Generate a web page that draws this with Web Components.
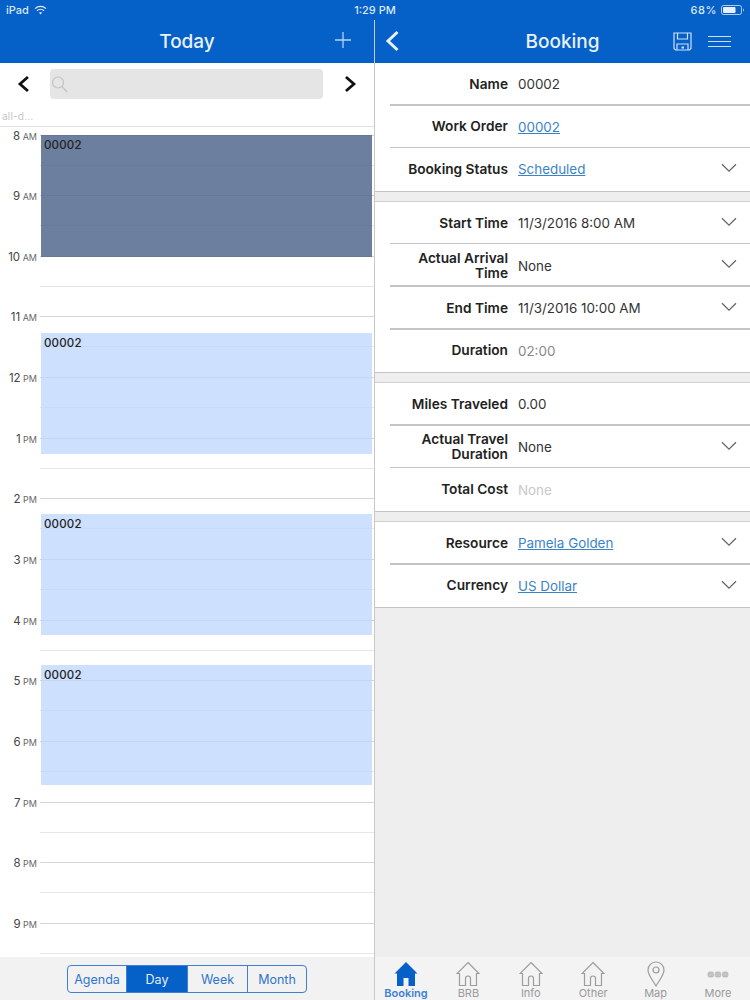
<!DOCTYPE html>
<html><head><meta charset="utf-8"><title>Booking</title>
<style>
html,body{margin:0;padding:0;background:#fff}
body{width:750px;height:1000px;overflow:hidden;font-family:Inter,"Liberation Sans",sans-serif;color:#222}
</style></head><body>
<app-shell>
  <status-bar slot="status"></status-bar>
  <cal-pane slot="left"></cal-pane>
  <booking-pane slot="right"></booking-pane>
</app-shell>
<script>
const def=(name,html,setup)=>customElements.define(name,class extends HTMLElement{
  connectedCallback(){ if(this.shadowRoot) return; const r=this.attachShadow({mode:'open'}); r.innerHTML=typeof html==='function'?html(this):html; setup&&setup(r,this);}
});
const chev=`<svg width="16" height="10" viewBox="0 0 16 10" fill="none" stroke="#666" stroke-width="1.300"><path d="M1 1.200 8 8.200 15 1.200"/></svg>`;
def('app-shell',`<style>:host{display:grid;grid-template-columns:375px 375px;grid-template-rows:20px 980px;width:750px;height:1000px;background:#0560c7}
::slotted([slot=status]){grid-column:1/3}</style><slot name="status"></slot><slot name="left"></slot><slot name="right"></slot>`);
def('status-bar',`<style>:host{display:flex;align-items:center;justify-content:space-between;padding:0 5px 0 6px;color:#dbe8f8;font:500 11px Inter,"Liberation Sans",sans-serif;position:relative}
.l,.r{display:flex;align-items:center;gap:5px}.r{gap:4px}.t{position:absolute;left:0;right:0;text-align:center}
</style><div class="l"><span>iPad</span><svg width="13" height="10" viewBox="0 0 13 10" fill="none" stroke="#dbe8f8" stroke-width="1.300"><path d="M1 3.600a8 8 0 0 1 11 0M3 5.800a5 5 0 0 1 7 0"/><path d="M5 7.800a2.200 2.200 0 0 1 3 0L6.500 9.400z" fill="#dbe8f8" stroke="none"/></svg></div>
<span class="t">1:29 PM</span>
<div class="r"><span style="letter-spacing:.6px">68%</span><svg width="24" height="10" viewBox="0 0 24 10"><rect x=".5" y=".5" width="20" height="9" rx="2" fill="none" stroke="#dbe8f8" opacity=".8"/><rect x="2" y="2" width="12.500" height="6" rx="1" fill="#e8f0fb"/><path d="M22 3.500c1 .4 1 2.600 0 3z" fill="#dbe8f8"/></svg></div>`);
def('nav-bar',`<style>:host{display:flex;align-items:center;justify-content:center;height:43px;background:#0560c7;color:#e9f1fb;position:relative;box-sizing:border-box;font:500 19px Inter,"Liberation Sans",sans-serif}
::slotted([slot=lead]){position:absolute;left:10px;top:10px}
::slotted([slot=trail]){position:absolute;right:19px;top:12px;display:flex;gap:16px;align-items:center}
::slotted(svg[slot=trail]){right:22px;top:11px}
</style><slot></slot><slot name="lead"></slot><slot name="trail"></slot>`);
def('cal-toolbar',`<style>:host{display:block;height:64px;box-sizing:border-box;border-bottom:1.500px solid #e2e2e2;background:#fff}
.top{display:flex;align-items:center;height:42px;padding:0 16px}
.s{margin:0 20px 0 19px;width:274px;height:30px;background:#e5e5e5;border-radius:4px;display:flex;align-items:center;padding-left:1px}
.a{font:400 10px Inter,"Liberation Sans",sans-serif;color:#c6c6c6;padding:5px 2px 0;letter-spacing:.2px}
</style><div class="top"><svg width="15" height="18" viewBox="0 0 15 18" fill="none" stroke="#111" stroke-width="2.800"><path d="M12 2 4 9l8 7"/></svg>
<div class="s"><svg width="17" height="18" viewBox="0 0 17 18" fill="none" stroke="#c2c2c2" stroke-width="1.200"><circle cx="7" cy="7.500" r="5.500"/><path d="M11 11.500 16 17"/></svg></div>
<svg width="15" height="18" viewBox="0 0 15 18" fill="none" stroke="#111" stroke-width="2.800"><path d="M3 2l8 7-8 7"/></svg></div><div class="a">all-d...</div>`);
def('cal-hour',h=>{const [n,m]=h.getAttribute('t').split(' ');return `<style>:host{display:block;height:60.670px;position:relative}
.lb{position:absolute;right:calc(100% - 37px);top:-6px;white-space:nowrap;font:400 11.500px Inter,"Liberation Sans",sans-serif;color:#444}
.lb small{font-size:9px;color:#666}
.ln{position:absolute;left:40px;right:0;height:1px;background:#d6d6d6}.a{top:0}.b{top:30px;background:#e6e6e6}
</style><div class="lb">${n}<small> ${m}</small></div><div class="ln a"></div><div class="ln b"></div>`});
def('cal-event',`<style>:host{position:absolute;left:41px;width:331px;display:block;box-sizing:border-box;background:rgba(188,214,252,.75);font:500 11.500px Inter,"Liberation Sans",sans-serif;color:#222;padding:3px 3px;letter-spacing:.2px}
:host([dark]){background:rgba(76,99,138,.82)}</style><slot></slot>`);
def('seg-ctl',`<style>:host{display:flex;width:240px;height:28px;box-sizing:border-box;border:1.500px solid #3f7fd6;border-radius:4px;font:400 12.500px Inter,"Liberation Sans",sans-serif;color:#2f74cf;overflow:hidden}
span{display:flex;align-items:center;justify-content:center;box-sizing:border-box;border-right:1px solid #3f7fd6;flex:none}
.on{background:#0560c7;color:#e5eefa}</style>
<span style="width:59px">Agenda</span><span class="on" style="width:61px">Day</span><span style="width:60px">Week</span><span style="flex:1;border:0">Month</span>`);
def('cal-pane',()=>{
 const hs=['8 AM','9 AM','10 AM','11 AM','12 PM','1 PM','2 PM','3 PM','4 PM','5 PM','6 PM','7 PM','8 PM','9 PM'];
 return `<style>:host{display:flex;flex-direction:column;height:980px;border-right:1px solid #c8c8c8;box-sizing:border-box;background:#fff}
.g{height:830px;position:relative;overflow:hidden;padding-top:7.500px;box-sizing:border-box}
.b{flex:1;background:#f2f2f2;display:flex;justify-content:center;padding-top:8px}
.h{position:relative}</style>
<nav-bar>Today<svg slot="trail" width="18" height="18" viewBox="0 0 18 18" stroke="#b9d2f1" stroke-width="1.300"><path d="M9 1v16M1 9h16"/></svg></nav-bar>
<cal-toolbar></cal-toolbar>
<div class="g"><div class="h">${hs.map(t=>`<cal-hour t="${t}"></cal-hour>`).join('')}
<cal-event dark style="top:0;height:122px">00002</cal-event>
<cal-event style="top:198px;height:121px">00002</cal-event>
<cal-event style="top:379px;height:121px">00002</cal-event>
<cal-event style="top:530px;height:120px">00002</cal-event></div></div>
<div class="b"><seg-ctl></seg-ctl></div>`});
def('form-row',h=>{const v=h.getAttribute('k');return `<style>:host{display:flex;align-items:center;height:42.600px;position:relative;box-sizing:border-box;font:400 13.400px Inter,"Liberation Sans",sans-serif;color:#333;background:#fff}
:host(:not(:last-child))::after{content:"";position:absolute;left:15px;right:0;bottom:0;height:1.500px;background:#c4c4c4}
.k{width:133px;box-sizing:border-box;padding-left:25px;text-align:right;font-weight:600;font-size:13.700px;color:#222;line-height:15px;flex:none}.v{margin-left:10px;flex:1}
.c{position:absolute;right:13px;top:15px;display:flex}
</style><div class="k">${v}</div><div class="v"><slot></slot></div>${h.hasAttribute('chev')?`<span class="c">${chev}</span>`:''}`});
def('form-sec',`<style>:host{display:block;background:#fff;border-bottom:1px solid #c4c4c4;border-top:1px solid #d0d0d0;margin-bottom:9px}:host([first]){border-top:0}</style><slot></slot>`);
def('tab-bar',`<style>:host{display:flex;height:43px;background:#f3f3f3;justify-content:space-between;padding:0 9px 0 8px}</style><slot></slot>`);
const home=(f)=>`<svg width="24" height="26" viewBox="0 0 24 26" fill="${f?'#0560c7':'none'}" stroke="${f?'none':'#9c9c9c'}" stroke-width="1.200"><path d="${f?'M12 1 23.500 12.500H21V25H14.500V17H9.500V25H3V12.500H.5z':'M12 1.500 23 12.500H20.500V24.500H14.500V17.500A2.500 2.500 0 0 0 9.500 17.500V24.500H3.500V12.500H1z'}"/></svg>`;
const ic={home:home(0),on:home(1),
 pin:`<svg width="18" height="26" viewBox="0 0 18 26" fill="none" stroke="#9c9c9c" stroke-width="1.200"><path d="M9 25C5 18 1 14 1 9a8 8 0 0 1 16 0c0 5-4 9-8 16z"/><circle cx="9" cy="9" r="3"/></svg>`,
 more:`<svg width="22" height="26" viewBox="0 0 22 26" fill="#c4c4c4" stroke="#aaa" stroke-width=".6"><rect x="1" y="11" width="5.500" height="5" rx="1.500"/><rect x="8.200" y="11" width="5.500" height="5" rx="1.500"/><rect x="15.500" y="11" width="5.500" height="5" rx="1.500"/></svg>`};
def('tab-item',h=>`<style>:host{display:flex;flex-direction:column;align-items:center;width:46px;padding-top:4px;font:400 11px Inter,"Liberation Sans",sans-serif;color:#9a9a9a;line-height:12px;height:43px;box-sizing:border-box}
:host([on]){color:#3c82d6;font-weight:600}svg{display:block}</style>${ic[h.getAttribute('i')]}<slot></slot>`);
const lnk='color:#3a83c8;text-decoration:underline';
def('booking-pane',`<style>:host{display:flex;flex-direction:column;height:980px;background:#eeeeee}.sp{flex:1}
svg{display:block}</style>
<nav-bar>Booking
<svg slot="lead" width="15" height="22" viewBox="0 0 15 22" fill="none" stroke="#e9f1fb" stroke-width="3"><path d="M12.500 2 3 11l9.500 9"/></svg>
<span slot="trail"><svg width="19" height="19" viewBox="0 0 19 19" fill="none" stroke="#cfe0f5" stroke-width="1.200"><path d="M1 1h17v15.500L16.500 18H2.500L1 16.500z"/><path d="M4.500 1v6h10V1M4 18v-6h11v6"/><rect x="8.500" y="14.500" width="2.500" height="2" fill="#cfe0f5" stroke="none"/></svg>
<svg width="23" height="13" viewBox="0 0 23 13" stroke="#cfe0f5" stroke-width="1.200"><path d="M0 1.500h23M0 6.500h23M0 11.500h23"/></svg></span></nav-bar>
<form-sec first><form-row k="Name">00002</form-row><form-row k="Work Order"><a style="${lnk}">00002</a></form-row><form-row k="Booking Status" chev><a style="${lnk}">Scheduled</a></form-row></form-sec>
<form-sec><form-row k="Start Time" chev>11/3/2016 8:00 AM</form-row><form-row k="Actual Arrival Time" chev>None</form-row><form-row k="End Time" chev>11/3/2016 10:00 AM</form-row><form-row k="Duration"><span style="color:#888">02:00</span></form-row></form-sec>
<form-sec><form-row k="Miles Traveled">0.00</form-row><form-row k="Actual Travel Duration" chev>None</form-row><form-row k="Total Cost"><span style="color:#c8c8c8">None</span></form-row></form-sec>
<form-sec><form-row k="Resource" chev><a style="${lnk}">Pamela Golden</a></form-row><form-row k="Currency" chev><a style="${lnk}">US Dollar</a></form-row></form-sec>
<div class="sp"></div>
<tab-bar><tab-item i="on" on>Booking</tab-item><tab-item i="home">BRB</tab-item><tab-item i="home">Info</tab-item><tab-item i="home">Other</tab-item><tab-item i="pin">Map</tab-item><tab-item i="more">More</tab-item></tab-bar>`);
</script></body></html>
